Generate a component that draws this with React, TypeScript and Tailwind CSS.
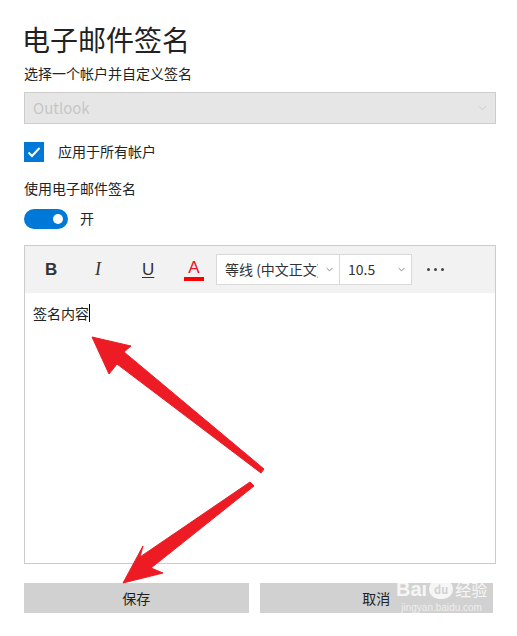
const Chevron = ({ className }: { className?: string }) => (
  <svg viewBox="0 0 10 6" className={className} fill="none" stroke="currentColor" strokeWidth="1">
    <path d="M1 1l4 4 4-4" />
  </svg>
);

const Arrows = () => (
  <svg className="absolute left-0 top-0 pointer-events-none" width="517" height="636" viewBox="0 0 517 636">
    <path
      fill="#ed1c24"
      stroke="#ed1c24"
      strokeWidth="1"
      strokeLinejoin="round"
      d="M92 337 L131 346 L124 352 L264 469 L261 473 L117 364 L109 374 Z"
    />
    <path
      fill="#ed1c24"
      stroke="#ed1c24"
      strokeWidth="1"
      strokeLinejoin="round"
      d="M254 486 L250 482 L140 557 L143 546 L123 583 L163 573 L151 568 Z"
    />
  </svg>
);

const App = () => {
  return (
    <div
      className="relative w-[517px] h-[636px] bg-white text-[#222] overflow-hidden"
      style={{ fontFamily: '"Noto Sans CJK SC", "Noto Sans", sans-serif' }}
    >
      <div className="px-6 pt-[19px]">
        <h1 className="text-[28px] leading-[40px] -ml-[2px] text-[#222]">电子邮件签名</h1>
        <p className="text-[14px] leading-[20px] mt-[4px]">选择一个帐户并自定义签名</p>
        <div className="mt-[9px] h-[32px] w-[472px] border border-[#cccccc] bg-[#e6e6e6] flex items-center justify-between px-2 text-[#c6c6c6]">
          <span className="text-[15px]">Outlook</span>
          <Chevron className="w-[9px] h-[6px] text-[#c8c8c8]" />
        </div>

        <label className="mt-[17px] flex items-center gap-[14px]">
          <span className="w-[20px] h-[20px] bg-[#0078d7] flex items-center justify-center">
            <svg viewBox="0 0 20 20" className="w-[20px] h-[20px]" fill="none" stroke="white" strokeWidth="2">
              <path d="M4.5 10.5l3.5 3.5 7.5-8" />
            </svg>
          </span>
          <span className="text-[14px]">应用于所有帐户</span>
        </label>

        <p className="text-[14px] leading-[20px] mt-[16px]">使用电子邮件签名</p>
        <div className="mt-[10px] flex items-center gap-[12px]">
          <span className="w-[44px] h-[20px] rounded-full bg-[#0078d7] flex items-center justify-end pr-[5px]">
            <span className="w-[10px] h-[10px] rounded-full bg-white" />
          </span>
          <span className="text-[14px]">开</span>
        </div>

        <div className="mt-[16px] w-[472px] h-[319px] border border-[#cccccc] flex flex-col">
          <div className="h-[47px] bg-[#f2f2f2] flex items-center pl-[20px]">
            <span className="w-[16px] text-[17px] font-bold text-[#333]" style={{ fontFamily: '"Liberation Sans", sans-serif' }}>B</span>
            <span className="ml-[34px] w-[16px] text-[18px] italic text-[#333]" style={{ fontFamily: '"Liberation Serif", serif' }}>I</span>
            <span className="ml-[31px] w-[16px] text-[17px] underline text-[#333] underline-offset-2" style={{ fontFamily: '"Liberation Sans", sans-serif' }}>U</span>
            <span className="ml-[25px] w-[22px] flex flex-col items-center">
              <span className="text-[17px] leading-[18px] text-[#e81123]" style={{ fontFamily: '"Liberation Sans", sans-serif' }}>A</span>
              <span className="w-[20px] h-[4px] bg-[#ff0000]" />
            </span>
            <div className="ml-[11px] w-[124px] h-[31px] bg-white border border-[#d9d9d9] flex items-center justify-between pl-[8px] pr-[6px] text-[14px] text-[#333]">
              <span className="whitespace-nowrap overflow-hidden w-[93px]">等线 (中文正文)</span>
              <Chevron className="w-[7px] h-[5px] text-[#555]" />
            </div>
            <div className="w-[72px] h-[31px] bg-white border border-[#d9d9d9] border-l-0 flex items-center justify-between pl-[8px] pr-[6px] text-[14px] text-[#333]">
              <span>10.5</span>
              <Chevron className="w-[7px] h-[5px] text-[#555]" />
            </div>
            <span className="ml-[15px] flex gap-[4px]">
              <span className="w-[3px] h-[3px] rounded-full bg-[#444]" />
              <span className="w-[3px] h-[3px] rounded-full bg-[#444]" />
              <span className="w-[3px] h-[3px] rounded-full bg-[#444]" />
            </span>
          </div>
          <div className="flex-1 bg-white px-[8px] pt-[10px] text-[14px] text-[#222] flex items-start">
            <span>签名内容</span>
            <span className="w-[1px] h-[18px] bg-black mt-[1px]" />
          </div>
        </div>

        <div className="mt-[19px] flex gap-[11px]">
          <button className="w-[226px] h-[30px] bg-[#d1d1d1] text-[14px] text-[#222]">保存</button>
          <button className="relative w-[235px] h-[30px] bg-[#d1d1d1] text-[14px] text-[#222]">
            取消
          </button>
        </div>
      </div>

      <div className="absolute left-[396px] top-[579px] flex flex-col items-center text-white/80 pointer-events-none">
        <div className="flex items-center gap-[2px] leading-none">
          <span className="text-[20px] font-bold" style={{ fontFamily: '"Liberation Sans", sans-serif' }}>Bai</span>
          <span className="w-[24px] h-[20px] rounded-full bg-white/80 text-[#d1d1d1] text-[11px] font-bold flex items-center justify-center">du</span>
          <span className="text-[16px]">经验</span>
        </div>
        <span className="text-[10px] text-[#eeeeee] mt-[1px]" style={{ fontFamily: '"Liberation Sans", sans-serif' }}>jingyan.baidu.com</span>
      </div>

      <Arrows />
    </div>
  );
};

export default App;
